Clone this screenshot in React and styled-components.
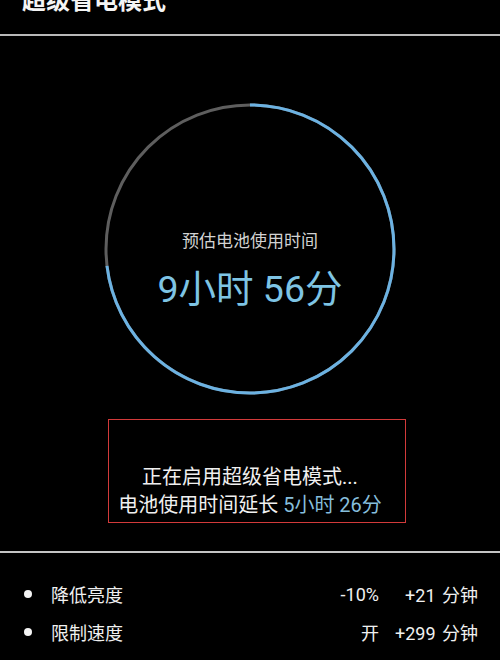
import React from "react";
import styled, { createGlobalStyle } from "styled-components";

const GlobalStyle = createGlobalStyle`
  html, body {
    margin: 0;
    padding: 0;
    background: #000;
  }
  body {
    font-family: Roboto, "Noto Sans CJK SC", sans-serif;
    color: #f2f2f2;
    overflow: hidden;
  }
`;

const Page = styled.div`
  width: 500px;
  height: 660px;
  background: #000;
  overflow: hidden;
  display: flex;
  flex-direction: column;
`;

const Header = styled.header`
  height: 34px;
  border-bottom: 2px solid #b8b8b8;
  padding-left: 22px;
  overflow: hidden;
`;

const Title = styled.h1`
  margin: -11px 0 0;
  font-size: 24px;
  line-height: 24px;
  font-weight: 700;
  color: #f4f4f4;
`;

const Gauge = styled.section`
  position: relative;
  width: 292px;
  height: 292px;
  margin: 67px auto 0;
`;

const Ring = styled.svg`
  display: block;
`;

const GaugeText = styled.div`
  position: absolute;
  inset: 0;
  display: flex;
  flex-direction: column;
  align-items: center;
  justify-content: center;
  padding-top: 42px;
`;

const GaugeLabel = styled.div`
  font-size: 17px;
  line-height: 24px;
  color: #d2d2d2;
`;

const GaugeValue = styled.div`
  margin-top: 14px;
  font-size: 37.5px;
  line-height: 44px;
  color: #7ec4e4;
`;

const Notice = styled.div`
  box-sizing: border-box;
  width: 298px;
  height: 104px;
  margin: 24px 0 0 108px;
  border: 1px solid #d23a3a;
  display: flex;
  flex-direction: column;
  justify-content: flex-end;
  align-items: center;
  padding-bottom: 3px;
`;

const NoticeLine = styled.div`
  font-size: 20px;
  line-height: 28px;
  color: #f0f0f0;
  margin-right: 14px;
  white-space: nowrap;
`;

const Accent = styled.span`
  color: #86bedc;
`;

const Divider = styled.hr`
  margin: 28px 0 0;
  border: none;
  border-top: 2px solid #c4c4c4;
`;

const List = styled.ul`
  list-style: none;
  margin: 0;
  padding: 22px 22px 0 24px;
`;

const Item = styled.li`
  display: grid;
  grid-template-columns: 27px 1fr auto 99px;
  align-items: center;
  height: 38px;
  font-size: 18px;
  color: #f0f0f0;
`;

const Dot = styled.span`
  width: 8px;
  height: 8px;
  border-radius: 50%;
  background: #f4f4f4;
`;

const Value = styled.span`
  text-align: right;
`;

const Gain = styled.span`
  text-align: right;
  word-spacing: 2px;
`;

const items = [
  { name: "降低亮度", value: "-10%", gain: "+21 分钟" },
  { name: "限制速度", value: "开", gain: "+299 分钟" },
];

const R = 144;
const C = 2 * Math.PI * R;
const used = 0.731;

export default function App() {
  return (
    <Page>
      <GlobalStyle />
      <Header>
        <Title>超级省电模式</Title>
      </Header>

      <Gauge>
        <Ring width="292" height="292" viewBox="0 0 292 292">
          <circle cx="146" cy="146" r={R} fill="none" stroke="#5e5e5e" strokeWidth="3" />
          <circle
            cx="146"
            cy="146"
            r={R}
            fill="none"
            stroke="#6cb2e2"
            strokeWidth="3"
            strokeDasharray={`${C * used} ${C}`}
            transform="rotate(-90 146 146)"
          />
        </Ring>
        <GaugeText>
          <GaugeLabel>预估电池使用时间</GaugeLabel>
          <GaugeValue>9小时 56分</GaugeValue>
        </GaugeText>
      </Gauge>

      <Notice>
        <NoticeLine>正在启用超级省电模式...</NoticeLine>
        <NoticeLine>
          电池使用时间延长 <Accent>5小时 26分</Accent>
        </NoticeLine>
      </Notice>

      <Divider />

      <List>
        {items.map((it) => (
          <Item key={it.name}>
            <Dot />
            <span>{it.name}</span>
            <Value>{it.value}</Value>
            <Gain>{it.gain}</Gain>
          </Item>
        ))}
      </List>
    </Page>
  );
}
